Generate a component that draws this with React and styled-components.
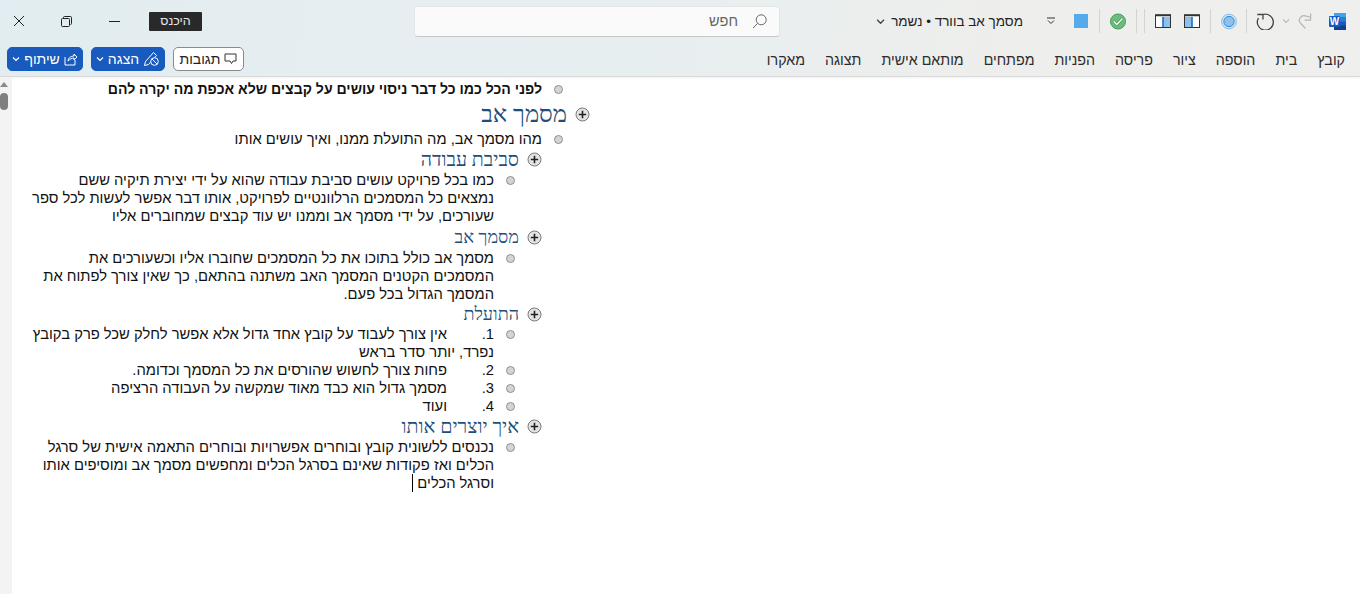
import styled, { createGlobalStyle } from 'styled-components';

const GlobalStyle = createGlobalStyle`
  html, body {
    margin: 0;
    padding: 0;
    background: #fff;
    font-family: "Liberation Sans", "DejaVu Sans", sans-serif;
  }
`;

const Page = styled.div`
  width: 1360px;
  height: 594px;
  overflow: hidden;
  display: flex;
  flex-direction: column;
`;

const Header = styled.header`
  height: 76px;
  flex: none;
  background: linear-gradient(100deg, #e2edf1 0%, #e7eef0 45%, #eeeeec 75%, #efefed 100%);
  border-bottom: 1px solid #d9d9d9;
  box-shadow: 0 1px 2px rgba(0, 0, 0, 0.06);
  display: flex;
  flex-direction: column;
`;

const TitleBar = styled.div`
  height: 45px;
  display: flex;
  align-items: center;
  padding-right: 14px;
`;

const Tool = styled.div`
  width: ${(p) => p.$w}px;
  margin-right: ${(p) => p.$gap || 0}px;
  height: 24px;
  flex: none;
  display: flex;
  align-items: center;
  justify-content: center;
`;

const Separator = styled.div`
  width: 1px;
  height: 24px;
  margin-right: ${(p) => p.$gap}px;
  background: #d2d4d3;
  flex: none;
`;

const DocTitle = styled.div`
  display: flex;
  align-items: center;
  gap: 6px;
  font-size: 13.5px;
  color: #222;
  width: 147px;
  margin-right: 24px;
  flex: none;
  white-space: nowrap;
`;

const SearchBox = styled.div`
  width: 366px;
  height: 31px;
  margin-right: 96px;
  flex: none;
  box-sizing: border-box;
  background: #fafafa;
  border: 1px solid #e3e5e6;
  border-bottom: 1px solid #c4c6c7;
  border-radius: 4px;
  display: flex;
  align-items: center;
  gap: 14px;
  padding-right: 12px;
  font-size: 14.5px;
  color: #666;
`;

const AccountTag = styled.div`
  width: 53px;
  height: 19px;
  margin-right: 212px;
  flex: none;
  background: #292929;
  color: #e6e6e6;
  font-size: 12.5px;
  border-radius: 1px;
  display: flex;
  align-items: center;
  justify-content: center;
`;

const RibbonRow = styled.div`
  height: 31px;
  display: flex;
  align-items: flex-start;
  justify-content: space-between;
  padding: 4px 15px 0 7px;
`;

const Tabs = styled.nav`
  display: flex;
  gap: 20px;
  padding-top: 5px;
`;

const Tab = styled.span`
  font-size: 14.25px;
  color: #2b2b2b;
  white-space: nowrap;
`;

const Actions = styled.div`
  display: flex;
  gap: 8px;
`;

const ActionButton = styled.div`
  height: 24px;
  box-sizing: border-box;
  width: ${(p) => p.$w}px;
  border-radius: 5px;
  display: flex;
  align-items: center;
  justify-content: center;
  gap: 4px;
  font-size: 14px;
  background: ${(p) => (p.$primary ? '#185abd' : '#fff')};
  color: ${(p) => (p.$primary ? '#fff' : '#222')};
  border: 1px solid ${(p) => (p.$primary ? '#185abd' : '#8a8a8a')};
`;

const Body = styled.main`
  flex: 1;
  display: flex;
  min-height: 0;
`;

const Outline = styled.div`
  padding-top: 3px;
  width: 1348px;
  box-sizing: border-box;
`;

const Row = styled.div`
  display: flex;
  align-items: flex-start;
  padding-right: ${(p) => p.$right}px;
`;

const Bullet = styled.span`
  width: 7px;
  height: 7px;
  flex: none;
  margin: 5px 0 0 12px;
  border-radius: 50%;
  background: #d4d4d4;
  border: 1px solid #909090;
`;

const Para = styled.div`
  font-size: ${(p) => (p.$bold ? 14.1 : 14.75)}px;
  line-height: 18px;
  color: #111;
  font-weight: ${(p) => (p.$bold ? 700 : 400)};
  width: ${(p) => (p.$wrap ? '464px' : 'auto')};
`;

const HeadingRow = styled.div`
  display: flex;
  align-items: center;
  height: ${(p) => p.$h}px;
  padding-right: ${(p) => p.$right}px;
`;

const Heading = styled.div`
  font-family: "Liberation Serif", serif;
  font-size: ${(p) => p.$size}px;
  color: #1f4e79;
  margin-right: 8px;
  white-space: nowrap;
`;

const Expander = styled.svg`
  width: 15px;
  height: 15px;
  flex: none;
`;

const ListNumber = styled.span`
  display: inline-block;
  width: 47px;
`;

const Caret = styled.span`
  display: inline-block;
  width: 1px;
  height: 18px;
  margin-right: 4px;
  background: #000;
  vertical-align: top;
`;

const SideRail = styled.aside`
  width: 12px;
  flex: none;
  background: #f3f3f3;
  display: flex;
  flex-direction: column;
  align-items: flex-end;
`;

const RailArrow = styled.div`
  width: 0;
  height: 0;
  margin-top: 5px;
  border-left: 4px solid transparent;
  border-right: 4px solid transparent;
  border-bottom: 5px solid #8a8a8a;
`;

const RailThumb = styled.div`
  width: 8px;
  height: 17px;
  margin-top: 6px;
  border-radius: 4px;
  background: #7f7f7f;
`;

const LEVEL1 = 797;
const LEVEL2 = 845;

const tabs = ['קובץ', 'בית', 'הוספה', 'ציור', 'פריסה', 'הפניות', 'מפתחים', 'מותאם אישית', 'תצוגה', 'מאקרו'];

const PlusIcon = () => (
  <Expander viewBox="0 0 15 15">
    <circle cx="7.5" cy="7.5" r="6.5" fill="#e4e4e4" stroke="#777" />
    <path d="M3.8 7.5h7.4M7.5 3.8v7.4" stroke="#222" strokeWidth="1.6" />
  </Expander>
);

const Chevron = ({ size = 8, color = '#444', width = 1.2 }) => (
  <svg width={size} height={size} viewBox="0 0 8 8">
    <path d="M1 2.5 4 5.5 7 2.5" fill="none" stroke={color} strokeWidth={width} />
  </svg>
);

const WordIcon = () => (
  <svg width="17" height="17" viewBox="0 0 17 17">
    <rect x="5" y="0" width="12" height="17" rx="1" fill="#185abd" />
    <rect x="5" y="0" width="12" height="4.5" fill="#41a5ee" />
    <rect x="5" y="4.5" width="12" height="4" fill="#2b7cd3" />
    <rect x="5" y="12.5" width="12" height="4.5" fill="#103f91" />
    <rect x="0" y="3" width="11" height="11" rx="1" fill="#1a5cbd" />
    <text x="5.5" y="12" textAnchor="middle" fontFamily="Liberation Sans" fontWeight="700" fontSize="10" fill="#fff">W</text>
  </svg>
);

const PaneIcon = ({ side }) => (
  <svg width="16" height="14" viewBox="0 0 16 14">
    <rect x="0.5" y="0.75" width="15" height="12.75" fill="#fff" stroke="#333" />
    <rect x={side === 'right' ? 8 : 1} y="3" width="7" height="10" fill="#8cc1ee" />
    <path d="M0 1.5h16" stroke="#333" strokeWidth="1.5" />
    <path d="M8 3v10" stroke="#1f6fc0" strokeWidth="1.6" />
  </svg>
);

export default function App() {
  return (
    <Page dir="rtl">
      <GlobalStyle />
      <Header>
        <TitleBar>
          <Tool $w={17}><WordIcon /></Tool>
          <Tool $w={14} $gap={17}>
            <svg width="15" height="18" viewBox="0 0 15 18">
              <path d="M8 17 2 10.5C0 7 3.5 2.5 7.5 3.5L13.5 5" fill="none" stroke="#b5b5b5" strokeWidth="1.3" />
              <path d="M13.5 1v7H7" fill="none" stroke="#b5b5b5" strokeWidth="1.3" />
            </svg>
          </Tool>
          <Tool $w={8} $gap={8}><Chevron color="#bbb" /></Tool>
          <Tool $w={18} $gap={8}>
            <svg width="18" height="18" viewBox="0 0 18 18">
              <path d="M7 2.5A8 8 0 1 1 2.5 6" fill="none" stroke="#444" strokeWidth="1.3" />
              <path d="M1.3 2.5H7V7.5" fill="none" stroke="#444" strokeWidth="1.3" />
            </svg>
          </Tool>
          <Separator $gap={9} />
          <Tool $w={16} $gap={9}>
            <svg width="17" height="17" viewBox="0 0 17 17">
              <circle cx="8.5" cy="8.5" r="7.8" fill="#d6eaf8" stroke="#7cb6e6" />
              <circle cx="8.5" cy="8.5" r="5.5" fill="#8cc1ee" stroke="#2f80d0" />
            </svg>
          </Tool>
          <Separator $gap={10} />
          <Tool $w={16} $gap={10}><PaneIcon side="left" /></Tool>
          <Tool $w={16} $gap={13}><PaneIcon side="right" /></Tool>
          <Separator $gap={10} />
          <Separator $gap={7} />
          <Tool $w={16} $gap={10}>
            <svg width="17" height="17" viewBox="0 0 17 17">
              <circle cx="8.5" cy="8.5" r="8" fill="#6fbb7f" stroke="#3f9a55" />
              <path d="M4 8.5l3.2 3.2L13 5.5" fill="none" stroke="#3f9a55" strokeWidth="3" />
              <path d="M4 8.5l3.2 3.2L13 5.5" fill="none" stroke="#fff" strokeWidth="1.5" />
            </svg>
          </Tool>
          <Separator $gap={10} />
          <Tool $w={14} $gap={11}>
            <svg width="14" height="14" viewBox="0 0 14 14"><rect width="14" height="14" fill="#55aaeb" /></svg>
          </Tool>
          <Tool $w={8} $gap={19}>
            <svg width="8" height="8" viewBox="0 0 8 8">
              <path d="M0 1h8" stroke="#333" />
              <path d="M1 3.5 4 6.5 7 3.5" fill="none" stroke="#333" />
            </svg>
          </Tool>
          <DocTitle>
            <span>מסמך אב בוורד • נשמר</span>
            <Chevron size={11} />
          </DocTitle>
          <SearchBox>
            <svg width="15" height="15" viewBox="0 0 15 15">
              <circle cx="9.2" cy="5.8" r="5" fill="none" stroke="#666" />
              <path d="M5.5 9.5 1 14" stroke="#666" />
            </svg>
            <span>חפש</span>
          </SearchBox>
          <AccountTag>היכנס</AccountTag>
          <Tool $w={11} $gap={29}>
            <svg width="11" height="11" viewBox="0 0 11 11"><path d="M0 5.5h11" stroke="#222" /></svg>
          </Tool>
          <Tool $w={11} $gap={37}>
            <svg width="11" height="11" viewBox="0 0 11 11">
              <rect x="0.5" y="2.5" width="8" height="8" rx="1" fill="none" stroke="#222" />
              <path d="M2.5 2.5V1.5a1 1 0 0 1 1-1h6a1 1 0 0 1 1 1v6a1 1 0 0 1-1 1" fill="none" stroke="#222" />
            </svg>
          </Tool>
          <Tool $w={12} $gap={36}>
            <svg width="12" height="12" viewBox="0 0 12 12"><path d="M1 1l10 10M11 1 1 11" stroke="#222" /></svg>
          </Tool>
        </TitleBar>
        <RibbonRow>
          <Tabs>
            {tabs.map((t) => (
              <Tab key={t}>{t}</Tab>
            ))}
          </Tabs>
          <Actions>
            <ActionButton $w={71}>
              <svg width="13" height="12" viewBox="0 0 13 12">
                <path d="M1 1h11v7H9L7.5 10.5 6 8H1z" fill="none" stroke="#333" />
              </svg>
              <span>תגובות</span>
            </ActionButton>
            <ActionButton $w={74} $primary>
              <svg width="17" height="17" viewBox="0 0 17 17">
                <path d="M1.5 15.5l1-4 8-9 3 3-8 9z" fill="none" stroke="#fff" />
                <circle cx="11.5" cy="11.5" r="3.8" fill="#185abd" stroke="#fff" />
                <path d="M9 9l5 5" stroke="#fff" />
              </svg>
              <span>הצגה</span>
              <Chevron size={8} color="#fff" />
            </ActionButton>
            <ActionButton $w={76} $primary>
              <svg width="14" height="14" viewBox="0 0 14 14">
                <path d="M1 5v8h10V8" fill="none" stroke="#fff" />
                <path d="M4 9c0-3 3-5 6-5V2l3 3-3 3V6c-2 0-4 1-6 3z" fill="none" stroke="#fff" />
              </svg>
              <span>שיתוף</span>
              <Chevron size={8} color="#fff" />
            </ActionButton>
          </Actions>
        </RibbonRow>
      </Header>
      <Body>
        <Outline>
          <Row $right={LEVEL1}>
            <Bullet />
            <Para $bold>לפני הכל כמו כל דבר ניסוי עושים על קבצים שלא אכפת מה יקרה להם</Para>
          </Row>
          <HeadingRow $h={32} $right={770}>
            <PlusIcon />
            <Heading $size={24}>מסמך אב</Heading>
          </HeadingRow>
          <Row $right={LEVEL1}>
            <Bullet />
            <Para>מהו מסמך אב, מה התועלת ממנו, ואיך עושים אותו</Para>
          </Row>
          <HeadingRow $h={23} $right={818}>
            <PlusIcon />
            <Heading $size={19.6}>סביבת עבודה</Heading>
          </HeadingRow>
          <Row $right={LEVEL2}>
            <Bullet />
            <Para $wrap>כמו בכל פרויקט עושים סביבת עבודה שהוא על ידי יצירת תיקיה ששם נמצאים כל המסמכים הרלוונטיים לפרויקט, אותו דבר אפשר לעשות לכל ספר שעורכים, על ידי מסמך אב וממנו יש עוד קבצים שמחוברים אליו</Para>
          </Row>
          <HeadingRow $h={24} $right={818}>
            <PlusIcon />
            <Heading $size={18}>מסמך אב</Heading>
          </HeadingRow>
          <Row $right={LEVEL2}>
            <Bullet />
            <Para $wrap>מסמך אב כולל בתוכו את כל המסמכים שחוברו אליו וכשעורכים את המסמכים הקטנים המסמך האב משתנה בהתאם, כך שאין צורך לפתוח את המסמך הגדול בכל פעם.</Para>
          </Row>
          <HeadingRow $h={22} $right={818}>
            <PlusIcon />
            <Heading $size={18}>התועלת</Heading>
          </HeadingRow>
          <Row $right={LEVEL2}>
            <Bullet />
            <Para $wrap><ListNumber>1.</ListNumber>אין צורך לעבוד על קובץ אחד גדול אלא אפשר לחלק שכל פרק בקובץ נפרד, יותר סדר בראש</Para>
          </Row>
          <Row $right={LEVEL2}>
            <Bullet />
            <Para $wrap><ListNumber>2.</ListNumber>פחות צורך לחשוש שהורסים את כל המסמך וכדומה.</Para>
          </Row>
          <Row $right={LEVEL2}>
            <Bullet />
            <Para $wrap><ListNumber>3.</ListNumber>מסמך גדול הוא כבד מאוד שמקשה על העבודה הרציפה</Para>
          </Row>
          <Row $right={LEVEL2}>
            <Bullet />
            <Para $wrap><ListNumber>4.</ListNumber>ועוד</Para>
          </Row>
          <HeadingRow $h={23} $right={818}>
            <PlusIcon />
            <Heading $size={19.6}>איך יוצרים אותו</Heading>
          </HeadingRow>
          <Row $right={LEVEL2}>
            <Bullet />
            <Para $wrap>נכנסים ללשונית קובץ ובוחרים אפשרויות ובוחרים התאמה אישית של סרגל הכלים ואז פקודות שאינם בסרגל הכלים ומחפשים מסמך אב ומוסיפים אותו וסרגל הכלים<Caret /></Para>
          </Row>
        </Outline>
        <SideRail>
          <RailArrow />
          <RailThumb />
        </SideRail>
      </Body>
    </Page>
  );
}
